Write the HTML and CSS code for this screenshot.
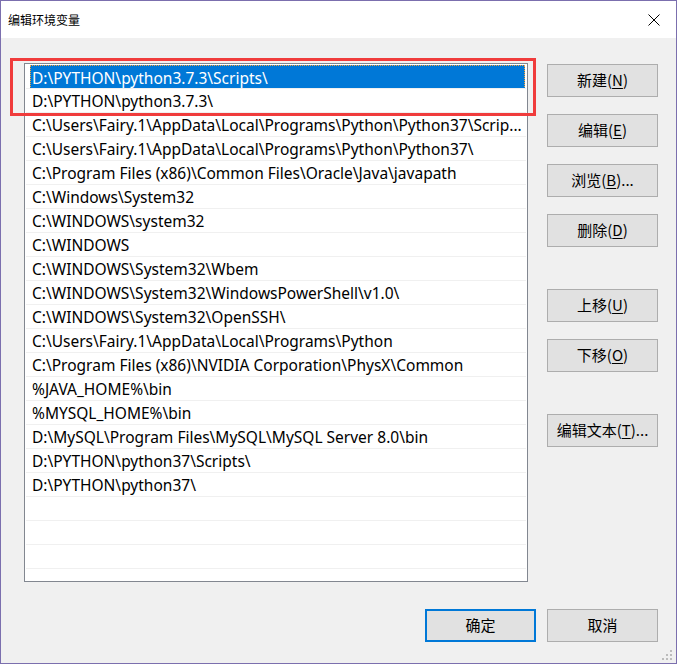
FILE: index.html
```html
<!DOCTYPE html>
<html lang="zh-CN">
<head>
<meta charset="utf-8">
<title>编辑环境变量</title>
<link rel="stylesheet" href="styles.css">
</head>
<body>
<div class="window">
  <div class="titlebar">
    <span class="title">编辑环境变量</span>
    <svg class="close" width="12" height="12" viewBox="0 0 12 12"><path d="M0.5 0.5 L11.5 11.5 M11.5 0.5 L0.5 11.5" stroke="#000" stroke-width="1" fill="none"/></svg>
  </div>
  <div class="content">
    <div class="main">
      <div class="listwrap">
        <div class="list">
          <div class="row selected"><span class="sel">D:\PYTHON\python3.7.3\Scripts\</span></div>
          <div class="row">D:\PYTHON\python3.7.3\</div>
          <div class="row">C:\Users\Fairy.1\AppData\Local\Programs\Python\Python37\Scrip...</div>
          <div class="row">C:\Users\Fairy.1\AppData\Local\Programs\Python\Python37\</div>
          <div class="row">C:\Program Files (x86)\Common Files\Oracle\Java\javapath</div>
          <div class="row">C:\Windows\System32</div>
          <div class="row">C:\WINDOWS\system32</div>
          <div class="row">C:\WINDOWS</div>
          <div class="row">C:\WINDOWS\System32\Wbem</div>
          <div class="row">C:\WINDOWS\System32\WindowsPowerShell\v1.0\</div>
          <div class="row">C:\WINDOWS\System32\OpenSSH\</div>
          <div class="row">C:\Users\Fairy.1\AppData\Local\Programs\Python</div>
          <div class="row">C:\Program Files (x86)\NVIDIA Corporation\PhysX\Common</div>
          <div class="row">%JAVA_HOME%\bin</div>
          <div class="row">%MYSQL_HOME%\bin</div>
          <div class="row">D:\MySQL\Program Files\MySQL\MySQL Server 8.0\bin</div>
          <div class="row">D:\PYTHON\python37\Scripts\</div>
          <div class="row">D:\PYTHON\python37\</div>
          <div class="row"></div>
          <div class="row"></div>
          <div class="row"></div>
          <div class="row"></div>
          <div class="row"></div>
        </div>
        <div class="highlight"></div>
      </div>
      <div class="buttons">
        <button class="btn">新建(<u>N</u>)</button>
        <button class="btn">编辑(<u>E</u>)</button>
        <button class="btn">浏览(<u>B</u>)...</button>
        <button class="btn">删除(<u>D</u>)</button>
        <button class="btn gap-lg">上移(<u>U</u>)</button>
        <button class="btn">下移(<u>O</u>)</button>
        <button class="btn gap-lg">编辑文本(<u>T</u>)...</button>
      </div>
    </div>
    <div class="footer">
      <button class="btn default">确定</button>
      <button class="btn">取消</button>
    </div>
  </div>
  <svg class="grip" width="11" height="11" viewBox="0 0 11 11">
    <rect x="8" y="0" width="2" height="2" fill="#bcbcbc"/>
    <rect x="4" y="4" width="2" height="2" fill="#bcbcbc"/>
    <rect x="8" y="4" width="2" height="2" fill="#bcbcbc"/>
    <rect x="0" y="8" width="2" height="2" fill="#bcbcbc"/>
    <rect x="4" y="8" width="2" height="2" fill="#bcbcbc"/>
    <rect x="8" y="8" width="2" height="2" fill="#bcbcbc"/>
  </svg>
</div>
</body>
</html>
```
FILE: styles.css
```css
* { box-sizing: border-box; }
html, body { margin: 0; padding: 0; background: #f0f0f0; }
body {
  font-family: "Noto Sans", "Noto Sans CJK SC", sans-serif;
  color: #000;
}
.window {
  position: relative;
  width: 677px;
  height: 664px;
  border: 1px solid #7b6fae;
  background: #f0f0f0;
  display: flex;
  flex-direction: column;
}
.titlebar {
  height: 37px;
  background: #fff;
  display: flex;
  align-items: center;
  justify-content: space-between;
  padding: 0 16px 0 7px;
  flex: none;
}
.title {
  font-family: "Noto Sans CJK SC", sans-serif;
  font-size: 12px;
  line-height: 16px;
  margin-top: 1px;
}
.close { display: block; }
.content {
  flex: 1;
  padding: 25px 18px 0 23px;
  display: flex;
  flex-direction: column;
}
.main {
  display: flex;
  gap: 19px;
}
.listwrap {
  position: relative;
  width: 504px;
  height: 519px;
  flex: none;
}
.list {
  width: 504px;
  height: 519px;
  border: 1px solid #828790;
  background: #fff;
  overflow: hidden;
  padding: 0 1px;
}
.row {
  height: 24px;
  border-top: 1px solid #f0f0f0;
  font-size: 15.5px;
  line-height: 25px;
  padding-left: 6px;
  white-space: nowrap;
  overflow: hidden;
}
.row.selected {
  border-top-color: transparent;
  padding: 1px 1px 0 4px;
  margin-top: -1px;
  height: 25px;
}
.sel {
  display: block;
  height: 24px;
  background: #0078d7;
  color: #fff;
  border: 1px dotted #f7a33a;
  line-height: 24px;
  padding-left: 1px;
  overflow: hidden;
}
.highlight {
  position: absolute;
  left: -14px;
  top: -5px;
  width: 526px;
  height: 58px;
  border: 3px solid #f03c3c;
  pointer-events: none;
}
.buttons {
  display: flex;
  flex-direction: column;
  gap: 17px;
  padding-top: 1px;
}
.btn {
  width: 111px;
  height: 33px;
  background: #e1e1e1;
  border: 1px solid #adadad;
  font-family: "Noto Sans CJK SC", sans-serif;
  font-size: 15px;
  color: #000;
  padding: 0 0 1px 0;
  line-height: 20px;
}
.btn u { text-underline-offset: 2px; }
.buttons .gap-lg { margin-top: 25px; }
.footer {
  display: flex;
  justify-content: flex-end;
  gap: 11px;
  margin-top: 27px;
}
.btn.default {
  border: 2px solid #0078d7;
}
.grip {
  position: absolute;
  right: 3px;
  bottom: 2px;
}
```
